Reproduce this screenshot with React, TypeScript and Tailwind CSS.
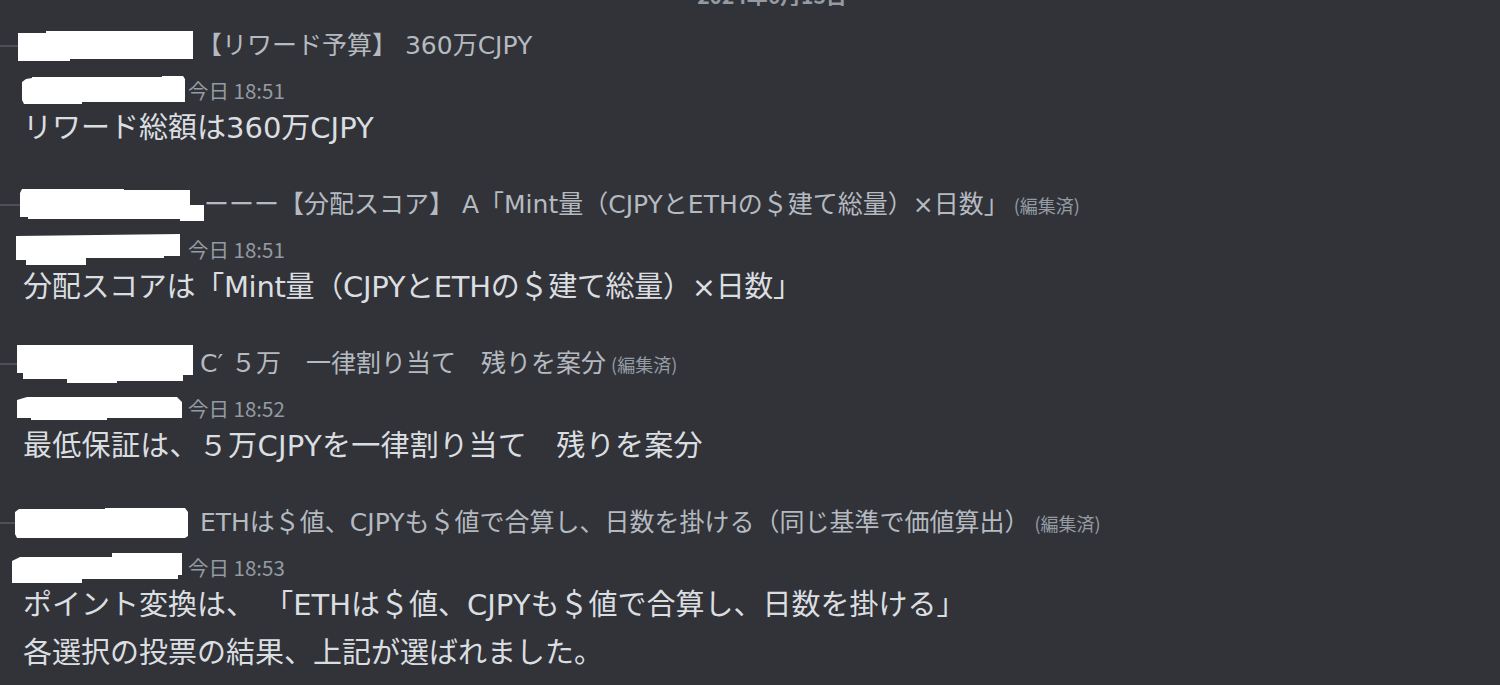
import React from "react";

type BlobProps = { w: number; h: number; pts: string };

function Blob({ w, h, pts }: BlobProps) {
  return (
    <svg width={w} height={h} viewBox={`0 0 ${w} ${h}`} className="shrink-0 block">
      <polygon points={pts} fill="#ffffff" />
    </svg>
  );
}

const CONTENT_FONT = "font-['DejaVu_Sans','Noto_Sans_CJK_JP',sans-serif]";
const META_FONT = "font-['Noto_Sans_CJK_JP','Noto_Sans',sans-serif]";

type Line = { text: string; cls: string };

type Group = {
  spine: number;
  replyBlob: BlobProps;
  replyGap: number;
  reply: string;
  edited: boolean;
  metaPad: number;
  metaBlob: BlobProps;
  time: string;
  lines: Line[];
};

const groups: Group[] = [
  {
    spine: 18,
    replyBlob: { w: 175, h: 30, pts: "0,2 28,2 28,0 175,0 175,28 52,28 52,30 0,30" },
    replyGap: 4,
    reply: "【リワード予算】 360万CJPY",
    edited: false,
    metaPad: 22,
    metaBlob: { w: 163, h: 28, pts: "4,3 10,2 10,1 140,1 140,0 161,0 163,3 163,26 60,26 60,28 2,28 0,24 0,6" },
    time: "今日 18:51",
    lines: [{ text: "リワード総額は360万CJPY", cls: "" }],
  },
  {
    spine: 20,
    replyBlob: { w: 184, h: 32, pts: "2,0 104,0 104,1 170,1 170,16 184,16 184,32 160,32 160,30 8,30 8,28 0,28 0,4" },
    replyGap: 0,
    reply: "ーーー【分配スコア】 A「Mint量（CJPYとETHの＄建て総量）×日数」",
    edited: true,
    metaPad: 16,
    metaBlob: { w: 164, h: 31, pts: "0,2 164,0 164,22 148,22 148,24 70,24 70,31 10,31 10,26 0,26" },
    time: "今日 18:51",
    lines: [{ text: "分配スコアは「Mint量（CJPYとETHの＄建て総量）×日数」", cls: "tracking-[-0.3px]" }],
  },
  {
    spine: 17,
    replyBlob: { w: 176, h: 38, pts: "0,0 176,0 176,30 166,30 166,36 100,36 100,38 50,38 50,34 6,34 6,28 0,28" },
    replyGap: 7,
    reply: "C′ ５万　一律割り当て　残りを案分",
    edited: true,
    metaPad: 17,
    metaBlob: { w: 165, h: 24, pts: "10,1 160,1 165,6 165,22 90,22 90,24 14,24 14,22 0,22 0,4" },
    time: "今日 18:52",
    lines: [{ text: "最低保証は、５万CJPYを一律割り当て　残りを案分", cls: "tracking-[0.3px]" }],
  },
  {
    spine: 15,
    replyBlob: { w: 173, h: 30, pts: "4,1 90,1 90,0 170,0 173,4 173,28 170,30 2,30 0,26 0,4" },
    replyGap: 12,
    reply: "ETHは＄値、CJPYも＄値で合算し、日数を掛ける（同じ基準で価値算出）",
    edited: true,
    metaPad: 12,
    metaBlob: { w: 173, h: 32, pts: "8,6 100,6 100,2 170,2 170,24 166,24 166,28 70,28 70,32 0,32 0,10" },
    time: "今日 18:53",
    lines: [
      { text: "ポイント変換は、 「ETHは＄値、CJPYも＄値で合算し、日数を掛ける」", cls: "" },
      { text: "各選択の投票の結果、上記が選ばれました。", cls: "" },
    ],
  },
];

function MessageGroup({ g }: { g: Group }) {
  return (
    <div className="flex flex-col">
      <div className="h-[30px] flex items-center">
        <div className="h-[2px] bg-[#4e5058] shrink-0" style={{ width: g.spine }} />
        <Blob {...g.replyBlob} />
        <div
          className={`flex items-baseline whitespace-nowrap text-[25px] leading-[30px] text-[#b5bac1] ${CONTENT_FONT}`}
          style={{ marginLeft: g.replyGap }}
        >
          <span>{g.reply}</span>
          {g.edited && (
            <span className={`ml-[5px] text-[18px] text-[#949ba4] ${META_FONT}`}>(編集済)</span>
          )}
        </div>
      </div>
      <div className="mt-[15px] h-[28px] flex items-center">
        <div className="w-[188px] shrink-0 flex items-center" style={{ paddingLeft: g.metaPad }}>
          <Blob {...g.metaBlob} />
        </div>
        <span className={`whitespace-nowrap text-[20.5px] leading-[28px] text-[#949ba4] ${META_FONT}`}>
          {g.time}
        </span>
      </div>
      <div className={`pl-[23px] text-[29px] leading-[48px] text-[#dbdee1] whitespace-nowrap ${CONTENT_FONT}`}>
        {g.lines.map((l, i) => (
          <div key={i} className={l.cls}>
            {l.text}
          </div>
        ))}
      </div>
    </div>
  );
}

export default function App() {
  return (
    <div className="w-[1500px] h-[685px] overflow-hidden bg-[#313338]">
      <div className="h-[6px] overflow-hidden flex justify-center pl-[44px]">
        <span
          className={`-mt-[15px] text-[21px] leading-[21px] font-semibold text-[#949ba4] whitespace-nowrap ${META_FONT}`}
        >
          2024年6月13日
        </span>
      </div>
      <div className="pt-[25px] flex flex-col gap-[38px]">
        {groups.map((g, i) => (
          <MessageGroup key={i} g={g} />
        ))}
      </div>
    </div>
  );
}
